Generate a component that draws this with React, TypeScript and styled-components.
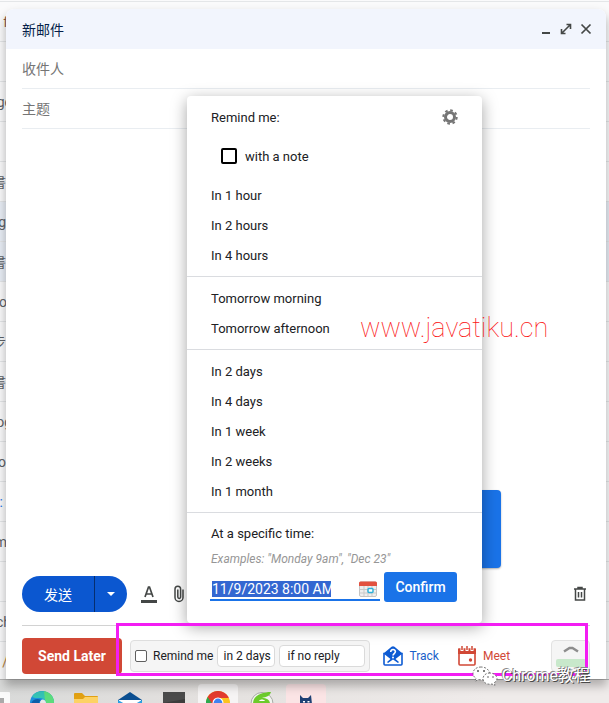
import React from 'react';
import styled, { createGlobalStyle, css } from 'styled-components';

const Global = createGlobalStyle`
  *, *::before, *::after { box-sizing: border-box; }
  body { margin: 0; font-family: Roboto, "Noto Sans CJK SC", sans-serif; font-size: 14px; color: #202124; }
  button, input { font: inherit; color: inherit; margin: 0; }
  button { border: 0; padding: 0; background: none; cursor: pointer; }
`;

const Desktop = styled.div`
  position: relative;
  display: flex;
  flex-direction: column;
  height: 100vh;
  min-height: 680px;
  overflow: hidden;
`;

const Stage = styled.main`
  position: relative;
  display: flex;
  flex: 1;
  min-height: 0;
`;

const Inbox = styled.div`
  position: absolute;
  inset: 0;
  overflow: hidden;
  background: #fafafb;
`;

const InboxRow = styled.div<{ $read?: boolean; $color?: string; $end?: number }>`
  display: flex;
  align-items: center;
  justify-content: flex-end;
  height: 40px;
  padding-right: calc(100% - ${(p) => p.$end ?? 6}px);
  border-bottom: 1px solid #e4e6e8;
  line-height: 20px;
  color: ${(p) => p.$color || '#5f6368'};
  background: ${(p) => (p.$read ? '#e9eef6' : 'transparent')};
  white-space: nowrap;
`;

const InboxTop = styled.div`
  height: 2px;
  border-bottom: 1px solid #e4e6e8;
`;

const Compose = styled.form`
  position: relative;
  display: flex;
  flex: 1;
  flex-direction: column;
  min-width: 0;
  margin: 9px 3px 0 6px;
  border-radius: 8px 8px 0 0;
  background: #fff;
  box-shadow: 0 6px 10px 1px rgba(0, 0, 0, 0.26);
`;

const TitleBar = styled.header`
  display: flex;
  align-items: center;
  justify-content: space-between;
  height: 40px;
  padding: 0 12px 0 16px;
  border-radius: 8px 8px 0 0;
  background: #f2f5fd;
  color: #041e49;
`;

const Title = styled.h1`
  margin: 0;
  font-size: 14px;
  font-weight: 400;
`;

const WindowButtons = styled.div`
  display: flex;
  gap: 4px;
`;

const IconButton = styled.button`
  display: flex;
  align-items: center;
  justify-content: center;
  width: 16px;
  height: 16px;
  color: #444746;
`;

const Field = styled.input`
  flex: none;
  height: 40px;
  margin: 0 16px;
  padding: 0;
  border: 0;
  border-bottom: 1px solid #e9edf1;
  background: none;
  outline: none;
  &::placeholder { color: #757575; opacity: 1; }
`;

const Body = styled.div`
  flex: 1;
`;

const Toolbar = styled.div`
  display: flex;
  align-items: center;
  gap: 14px;
  height: 36px;
  margin: 0 18px 13px 16px;
`;

const SendGroup = styled.div`
  display: flex;
  height: 36px;
  overflow: hidden;
  border-radius: 18px;
  background: #0b57d0;
  color: #fff;
`;

const Send = styled.button`
  width: 73px;
  border-right: 1px solid #062e6f;
`;

const SendMore = styled.button`
  display: flex;
  align-items: center;
  justify-content: center;
  width: 32px;
`;

const Spacer = styled.div`
  flex: 1;
`;

const Footer = styled.footer`
  display: flex;
  align-items: center;
  height: 54px;
  margin: 0 16px;
  border-top: 1px solid #d2d2d2;
  padding-top: 6px;
`;

const SendLater = styled.button`
  width: 100px;
  height: 36px;
  border-radius: 4px;
  background: #d14836;
  color: #fff;
  font-size: 14px;
  font-weight: 700;
`;

const ReminderBar = styled.div`
  display: flex;
  align-items: center;
  gap: 4px;
  height: 32px;
  margin-left: 8px;
  padding: 0 4px;
  border: 1px solid #dedede;
  border-radius: 4px;
  background: #f5f5f5;
  font-size: 12px;
`;

const ReminderLabel = styled.label`
  display: flex;
  align-items: center;
  gap: 6px;
  white-space: nowrap;
`;

const SmallCheck = styled.input`
  appearance: none;
  width: 12px;
  height: 12px;
  border: 1px solid #5f5f5f;
  border-radius: 2px;
  background: #fff;
`;

const Pill = styled.input<{ $wide?: boolean }>`
  width: ${(p) => (p.$wide ? 86 : 58)}px;
  height: 22px;
  padding: 0 0 0 ${(p) => (p.$wide ? 7 : 5)}px;
  border: 1px solid #dadada;
  border-radius: 4px;
  background: #fff;
  outline: none;
`;

const Action = styled.button<{ $tone: 'blue' | 'red' }>`
  display: flex;
  align-items: center;
  gap: 6px;
  font-size: 12px;
  ${(p) =>
    p.$tone === 'blue'
      ? css`margin-left: 13px; color: #1a5fc9;`
      : css`margin-left: 18px; color: #d14836;`}
`;

const Expand = styled.button`
  display: flex;
  flex-direction: column;
  align-items: center;
  justify-content: space-between;
  width: 39px;
  height: 32px;
  margin-left: auto;
  padding: 5px 0 4px;
  border: 1px solid #e2e2e2;
  border-radius: 4px;
  background: #f5f5f5;
`;

const Meter = styled.span`
  width: 30px;
  height: 8px;
  border-radius: 2px;
  background: #c8e8cb;
`;

const BlueCard = styled.div`
  position: absolute;
  top: 481px;
  left: 295px;
  width: 200px;
  height: 78px;
  border-radius: 4px;
  background: #1a73e8;
  box-shadow: 0 1px 2px rgba(0, 0, 0, 0.3);
`;

const Popup = styled.section`
  position: absolute;
  top: 87px;
  left: 181px;
  width: 295px;
  padding-bottom: 21px;
  border-radius: 4px;
  background: #fff;
  box-shadow: 0 4px 16px rgba(0, 0, 0, 0.36);
  font-size: 13px;
`;

const PopupHead = styled.div`
  display: flex;
  align-items: center;
  justify-content: space-between;
  height: 42px;
  padding: 0 24px;
`;

const NoteLabel = styled.label`
  display: flex;
  align-items: center;
  gap: 8px;
  height: 36px;
  padding-left: 34px;
`;

const NoteCheck = styled.input`
  appearance: none;
  width: 16px;
  height: 16px;
  border: 2px solid #000;
  border-radius: 2px;
`;

const OptionGroup = styled.div`
  display: flex;
  flex-direction: column;
  padding: 6px 0;
  border-bottom: 1px solid #dadce0;
`;

const Option = styled.button`
  height: 30px;
  padding: 0 24px;
  text-align: left;
`;

const Specific = styled.div`
  padding: 6px 24px 0;
`;

const SpecificLabel = styled.label`
  display: block;
  line-height: 30px;
`;

const Hint = styled.p`
  margin: 0;
  font-size: 12px;
  line-height: 20px;
  font-style: italic;
  color: #969696;
`;

const TimeRow = styled.div`
  display: flex;
  gap: 4px;
  margin-top: 3px;
  font-size: 14px;
`;

const TimeBox = styled.div`
  display: flex;
  align-items: center;
  width: 170px;
  height: 29px;
  margin-left: -1px;
  padding: 6px 3px 0 2px;
  border-bottom: 2px solid #1a73e8;
`;

const TimeInput = styled.input`
  width: 121px;
  height: 16px;
  padding: 0;
  border: 0;
  outline: none;
  color: #fff;
  background: linear-gradient(#3367d1, #3367d1) left / 119px 100% no-repeat;
`;

const CalendarButton = styled(IconButton)`
  width: 18px;
  margin-left: auto;
`;

const Confirm = styled.button`
  width: 73px;
  height: 30px;
  border-radius: 3px;
  background: #1a73e8;
  color: #fff;
  font-weight: 500;
`;

const Highlight = styled.div`
  position: absolute;
  right: 18px;
  bottom: 3px;
  left: 110px;
  height: 53px;
  border: 3px solid #f31df3;
  pointer-events: none;
`;

const SiteMark = styled.span`
  position: absolute;
  top: 302px;
  left: 354px;
  font-size: 27px;
  font-weight: 100;
  line-height: 34px;
  color: #fb1414;
`;

const ChannelMark = styled.div`
  position: absolute;
  right: 19px;
  bottom: 16px;
  display: flex;
  align-items: center;
  gap: 4px;
  font-size: 16px;
  line-height: 22px;
  color: #fff;
  text-shadow: 1px 1px 0 #4a4a4a, -1px -1px 0 #8a8a8a;
`;

const Taskbar = styled.nav`
  display: flex;
  flex: none;
  align-items: flex-start;
  gap: 4px;
  height: 24px;
  border-top: 1px solid #b5b5b5;
  background: linear-gradient(90deg, #d9dad9, #e4e1df 35%, #efebea 80%);
  overflow: hidden;
`;

const TaskButton = styled.button<{ $tile?: string; $first?: boolean }>`
  display: flex;
  flex: none;
  align-items: flex-start;
  justify-content: ${(p) => (p.$first ? 'flex-start' : 'center')};
  width: ${(p) => (p.$first ? 18 : 40)}px;
  height: 40px;
  margin-top: 4px;
  padding-top: 7px;
  border-radius: 4px;
  background: ${(p) => p.$tile || 'none'};
`;

const rows: { text: string; read?: boolean; color?: string; end?: number }[] = [
  { text: 'f', color: '#8a5a44', end: 8 },
  { text: '' },
  { text: 'ge', end: 12 },
  { text: '' },
  { text: '書' },
  { text: 'g', read: true },
  { text: '書', read: true },
  { text: 'o', end: 7 },
  { text: '步' },
  { text: '書' },
  { text: 'og', end: 12 },
  { text: 'o' },
  { text: ':', color: '#1a73e8', end: 3 },
  { text: 'm', end: 7 },
  { text: '' },
  { text: 'ch', end: 11 },
  { text: '/', color: '#b8843c', end: 8 },
];

const groups = [
  ['In 1 hour', 'In 2 hours', 'In 4 hours'],
  ['Tomorrow morning', 'Tomorrow afternoon'],
  ['In 2 days', 'In 4 days', 'In 1 week', 'In 2 weeks', 'In 1 month'],
];

const Gear = () => (
  <svg width="16" height="16" viewBox="0 0 16 16" fill="none" stroke="#757575">
    <circle cx="8" cy="8" r="4.5" strokeWidth="3" />
    <circle cx="8" cy="8" r="6.7" strokeWidth="2" strokeDasharray="2.63 2.63" />
  </svg>
);

const Envelope = () => (
  <svg width="20" height="20" viewBox="0 0 20 20">
    <path d="M1 7.500h18V18q0 1-1 1H2q-1 0-1-1z" fill="#fff" stroke="#0d5bd3" strokeWidth="1.600" />
    <path d="M.5 7.500 8.500.8q1.500-1.100 3 0l8 6.700L12.500 13l3.500 3-1 1-5-3.600L5 17l-1-1 3.500-3z" fill="#0d5bd3" />
    <path d="M7.700 6c0-3.200 4.700-3.200 4.700-.4 0 2-2.400 1.900-2.400 4" fill="none" stroke="#fff" strokeWidth="1.600" />
    <circle cx="10" cy="11.500" r="1" fill="#fff" />
  </svg>
);

const MeetCalendar = () => (
  <svg width="20" height="20" viewBox="0 0 20 20">
    <path d="M2 3h16v15q0 1-1 1H3q-1 0-1-1z" fill="#fff" stroke="#d14836" strokeWidth="1.600" />
    <path d="M1 3h18v5H1z" fill="#d14836" />
    <path d="M5 0v5M10 0v5M15 0v5" stroke="#fff" strokeWidth="3" />
    <path d="M5 0v4M10 0v4M15 0v4" stroke="#d14836" strokeWidth="1.500" />
    <circle cx="13.500" cy="14" r="1.700" fill="#d14836" />
  </svg>
);

const SmallCalendar = () => (
  <svg width="18" height="16" viewBox="0 0 18 16">
    <rect x=".5" y="1" width="17" height="14.500" rx="1.500" fill="#eee" stroke="#c4c4c4" />
    <path d="M0 5V2Q0 .5 1.500.5h15Q18 .5 18 2v3z" fill="#e2513f" />
    <path d="M1 8.500h16M1 12h16M5 5v10M9 5v10M13 5v10" stroke="#c9c9c9" />
    <rect x="9" y="7.500" width="5" height="4" rx="1" fill="#fff" stroke="#2eb0d9" strokeWidth="1.500" />
  </svg>
);

const Bubbles = () => (
  <svg width="26" height="20" viewBox="0 0 26 20" fill="#fff" stroke="#666" strokeWidth=".9" strokeDasharray="2 1.500">
    <path d="M9 1C4 1 1 4 1 7.500c0 2 1 3.500 3 4.800l-1 3 3.500-1.700c7 1.300 11-2 11-6C17.500 4 14 1 9 1z" />
    <path d="M18 7c-4.500 0-7 2.700-7 5.700 0 4 4 6.300 9 5.300l3 1.300-.8-2.600c2-1.300 2.800-2.500 2.800-4C25 9.700 22 7 18 7z" />
    <g fill="#555" stroke="none">
      <circle cx="6" cy="5" r="1" />
      <circle cx="12" cy="5" r="1" />
      <circle cx="16" cy="11" r=".8" />
      <circle cx="21" cy="11" r=".8" />
    </g>
  </svg>
);

const TaskView = () => (
  <svg width="10" height="24" viewBox="0 0 10 24">
    <path d="M0 1h9q1 0 1 1v14H0z" fill="#fafafa" />
    <path d="M0 7h4v8H0z" fill="#a9a9a9" />
  </svg>
);

const Edge = () => (
  <svg width="24" height="24" viewBox="0 0 24 24">
    <circle cx="12" cy="12" r="12" fill="#1b8fdc" />
    <path d="M2 6C5-1 17-2 22 5c4 6 1 12-6 11 2-6-2-9-7-9-3 0-5 0-7-1z" fill="#35c3b5" />
    <path d="M14 .2c5 .5 9 4 10 10 0 5-4 7-8 6 1-3 0-5-1-7z" fill="#5bdc7c" />
    <path d="M10 12c0-5 6-4 6 0s-6 6-6 0z" fill="#e6e8e8" />
    <path d="M1 16C0 10 6 6 11 9c-3 2-3 8 1 12-5 2-10 0-11-5z" fill="#0d5ea9" />
  </svg>
);

const Folder = () => (
  <svg width="24" height="24" viewBox="0 0 24 24">
    <path d="M0 3q0-1 1-1h7l3 3h12q1 0 1 1v5H0z" fill="#e2a113" />
    <path d="M0 8h9l2-2h13v17H0z" fill="#fdd264" />
  </svg>
);

const Mail = () => (
  <svg width="24" height="24" viewBox="0 0 24 24">
    <path d="M0 9 12 1l12 8v14H0z" fill="#0b4f91" />
    <path d="M1 9h22v9H1z" fill="#fff" />
    <path d="m0 9 12 7 12-7v14H0z" fill="#2a9fe4" />
  </svg>
);

const Terminal = () => (
  <svg width="22" height="24" viewBox="0 0 22 24">
    <rect y="1" width="22" height="22" fill="#3c3c3c" />
    <path d="M0 1h22v7L0 12z" fill="#4b4b4b" />
  </svg>
);

const Chrome = () => (
  <svg width="24" height="24" viewBox="0 0 24 24">
    <circle cx="12" cy="12" r="12" fill="#fcc31e" />
    <path d="M12 12 1.600 6A12 12 0 0 0 12 24l5-9z" fill="#2da94f" />
    <path d="M1.600 6a12 12 0 0 1 20.800 0L22.500 7H12L7 14z" fill="#e33b2e" />
    <circle cx="12" cy="12" r="5.500" fill="#fff" />
    <circle cx="12" cy="12" r="4.400" fill="#3f82f0" />
  </svg>
);

const GreenBrowser = () => (
  <svg width="24" height="24" viewBox="0 0 24 24">
    <circle cx="12" cy="12.500" r="11" fill="#f2f4f0" stroke="#a9aba6" />
    <path d="M3 13C3 4 12 1 21 1c-1 4-5 5-9 6 5 0 8 2 8 6H9c0 5 5 6 10 4-4 6-16 5-16-4z" fill="#6ccb2b" />
    <path d="M9 10c1-2 5-2 6 0z" fill="#fff" />
  </svg>
);

const Cat = () => (
  <svg width="14" height="24" viewBox="0 0 14 24">
    <path d="M1 4l3 3h5l3-3 1 9q-1 3-3 4v6H4v-6q-3-1-3-4z" fill="#1f4175" />
    <path d="M4 10h2v1.500H4zM8.500 10h2v1.500h-2z" fill="#fff" />
  </svg>
);

const tasks = [
  { name: 'Edge', icon: <Edge /> },
  { name: 'Files', icon: <Folder /> },
  { name: 'Mail', icon: <Mail /> },
  { name: 'Terminal', icon: <Terminal /> },
  { name: 'Chrome', icon: <Chrome />, tile: '#f6f4f4' },
  { name: 'Browser', icon: <GreenBrowser /> },
  { name: 'Cat', icon: <Cat />, tile: '#fbe4e5' },
];

export default function App() {
  return (
    <>
      <Global />
      <Desktop>
        <Stage>
          <Inbox>
            <InboxTop />
            {rows.map((r, i) => (
              <InboxRow key={i} $read={r.read} $color={r.color} $end={r.end}>{r.text}</InboxRow>
            ))}
          </Inbox>
          <Compose onSubmit={(e) => e.preventDefault()}>
            <TitleBar>
              <Title>新邮件</Title>
              <WindowButtons>
                <IconButton type="button" aria-label="Minimize">
                  <svg width="16" height="16" viewBox="0 0 16 16"><path d="M4 11h8v2H4z" fill="currentColor" /></svg>
                </IconButton>
                <IconButton type="button" aria-label="Full screen">
                  <svg width="16" height="16" viewBox="0 0 16 16" fill="none" stroke="currentColor" strokeWidth="1.600">
                    <path d="M8.500 3.500h4V8M7.500 12.500h-4V8M4 12l8-8" />
                  </svg>
                </IconButton>
                <IconButton type="button" aria-label="Close">
                  <svg width="16" height="16" viewBox="0 0 16 16" fill="none" stroke="currentColor" strokeWidth="1.700">
                    <path d="m3.500 3.500 9 9M12.500 3.500l-9 9" />
                  </svg>
                </IconButton>
              </WindowButtons>
            </TitleBar>
            <Field aria-label="收件人" placeholder="收件人" />
            <Field aria-label="主题" placeholder="主题" />
            <Body />
            <Toolbar>
              <SendGroup>
                <Send type="button">发送</Send>
                <SendMore type="button" aria-label="More send options">
                  <svg width="8" height="4" viewBox="0 0 8 4"><path d="M0 0h8L4 4z" fill="#fff" /></svg>
                </SendMore>
              </SendGroup>
              <IconButton type="button" aria-label="Formatting">
                <svg width="16" height="18" viewBox="0 0 16 18" fill="none" stroke="currentColor">
                  <path d="M4 12 7.500 2h1L12 12M5.300 9h5.400" strokeWidth="1.700" />
                  <path d="M0 16.500h16" strokeWidth="3" />
                </svg>
              </IconButton>
              <IconButton type="button" aria-label="Attach">
                <svg width="12" height="18" viewBox="0 0 12 18" fill="none" stroke="currentColor" strokeWidth="1.500">
                  <path d="M10 4.500v8a4 4 0 0 1-8 0V4a2.800 2.800 0 0 1 5.600 0v8a1.400 1.400 0 0 1-2.800 0V4.500" />
                </svg>
              </IconButton>
              <Spacer />
              <IconButton type="button" aria-label="Discard">
                <svg width="14" height="16" viewBox="0 0 14 16" fill="none" stroke="currentColor" strokeWidth="1.500">
                  <path d="M1 3h12M5 2.500V1.500h4v1M2.500 3v11h9V3M5.500 6v5.500M8.500 6v5.500" />
                </svg>
              </IconButton>
            </Toolbar>
            <Footer>
              <SendLater type="button">Send Later</SendLater>
              <ReminderBar>
                <ReminderLabel><SmallCheck type="checkbox" />Remind me</ReminderLabel>
                <Pill aria-label="When" defaultValue="in 2 days" />
                <Pill aria-label="Condition" $wide defaultValue="if no reply" />
              </ReminderBar>
              <Action type="button" $tone="blue"><Envelope />Track</Action>
              <Action type="button" $tone="red"><MeetCalendar />Meet</Action>
              <Expand type="button" aria-label="Expand">
                <svg width="16" height="7" viewBox="0 0 16 7" fill="none" stroke="#8d8d8d" strokeWidth="2.500">
                  <path d="m1 5.500 5.500-3.500h3L15 5.500" />
                </svg>
                <Meter />
              </Expand>
            </Footer>
            <BlueCard />
            <Popup>
              <PopupHead>
                <span>Remind me:</span>
                <IconButton type="button" aria-label="Settings"><Gear /></IconButton>
              </PopupHead>
              <NoteLabel><NoteCheck type="checkbox" />with a note</NoteLabel>
              {groups.map((g) => (
                <OptionGroup key={g[0]}>
                  {g.map((o) => <Option type="button" key={o}>{o}</Option>)}
                </OptionGroup>
              ))}
              <Specific>
                <SpecificLabel htmlFor="time">At a specific time:</SpecificLabel>
                <Hint>Examples: "Monday 9am", "Dec 23"</Hint>
                <TimeRow>
                  <TimeBox>
                    <TimeInput id="time" defaultValue="11/9/2023 8:00 AM" />
                    <CalendarButton type="button" aria-label="Pick a date"><SmallCalendar /></CalendarButton>
                  </TimeBox>
                  <Confirm type="button">Confirm</Confirm>
                </TimeRow>
              </Specific>
            </Popup>
            <Highlight />
            <SiteMark>www.javatiku.cn</SiteMark>
          </Compose>
        </Stage>
        <Taskbar>
          <TaskButton $first aria-label="Task view"><TaskView /></TaskButton>
          {tasks.map((t) => (
            <TaskButton key={t.name} $tile={t.tile} aria-label={t.name}>{t.icon}</TaskButton>
          ))}
        </Taskbar>
        <ChannelMark><Bubbles />Chrome教程</ChannelMark>
      </Desktop>
    </>
  );
}
